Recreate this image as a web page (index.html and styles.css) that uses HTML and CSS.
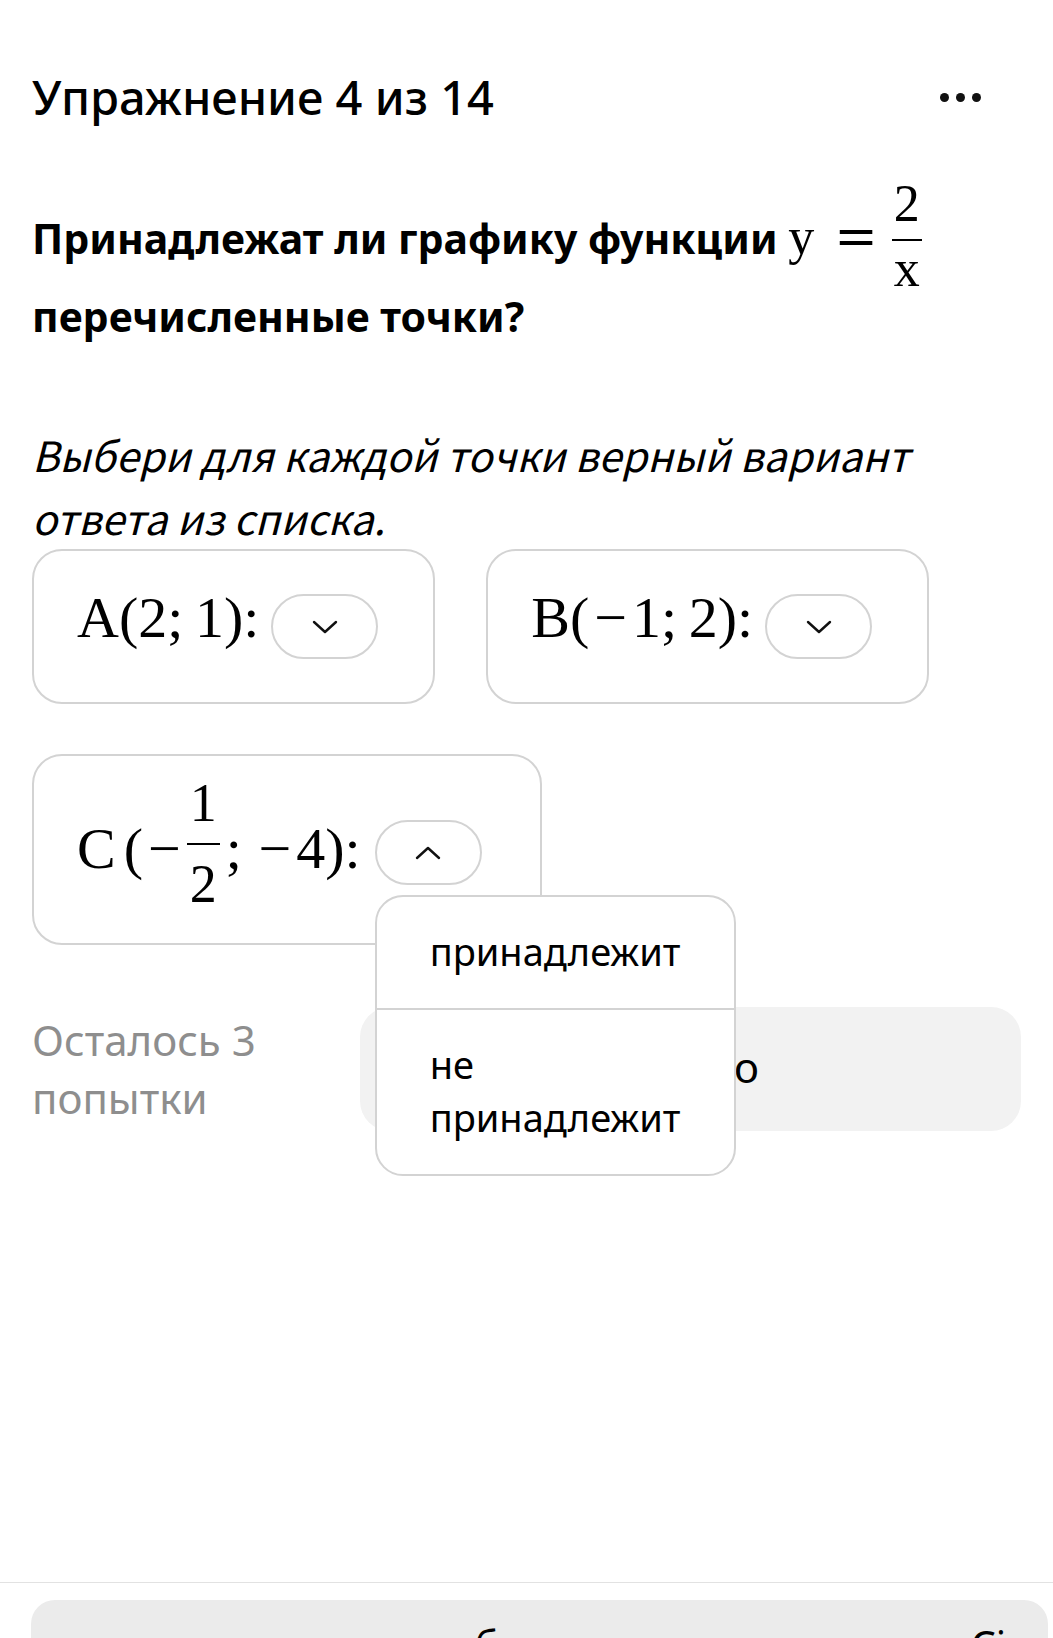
FILE: index.html
```html
<!DOCTYPE html>
<html lang="ru">
<head>
    <meta charset="UTF-8">
    <meta name="viewport" content="width=device-width, initial-scale=1.0">
    <title>Упражнение 4 из 14</title>
    <link rel="stylesheet" href="styles.css">
</head>
<body>

<div class="page">
    <header class="top">
        <h1 class="title">Упражнение 4 из 14</h1>
        <button class="more" aria-label="Ещё"><span></span><span></span><span></span></button>
    </header>

    <main class="task">
        <p class="question">Принадлежат ли графику функции <span class="math">y<span class="eq">=</span><span class="frac"><span class="num">2</span><span class="den">x</span></span></span> перечисленные точки?</p>

        <p class="hint">Выбери для каждой точки верный вариант ответа из списка.</p>

        <div class="points">
            <div class="point">
                <span class="tex">A(2;&thinsp;1):</span>
                <button class="pick">
                    <svg width="26" height="14" viewBox="0 0 26 14"><path d="M2 2l11 10 11-10" fill="none" stroke="#111" stroke-width="2.4" stroke-linecap="round" stroke-linejoin="round"/></svg>
                </button>
            </div>
            <div class="point">
                <span class="tex">B(<span class="minus">−</span>1;&thinsp;2):</span>
                <button class="pick">
                    <svg width="26" height="14" viewBox="0 0 26 14"><path d="M2 2l11 10 11-10" fill="none" stroke="#111" stroke-width="2.4" stroke-linecap="round" stroke-linejoin="round"/></svg>
                </button>
            </div>
            <div class="point point-tall">
                <span class="tex">C<span class="paren">(</span><span class="minus">−</span><span class="frac small"><span class="num">1</span><span class="den">2</span></span>;&thinsp;<span class="minus">−</span>4):</span>
                <div class="pick-wrap">
                    <button class="pick">
                        <svg width="26" height="14" viewBox="0 0 26 14"><path d="M2 12l11-10 11 10" fill="none" stroke="#111" stroke-width="2.4" stroke-linecap="round" stroke-linejoin="round"/></svg>
                    </button>
                    <ul class="menu">
                        <li>принадлежит</li>
                        <li>не принадлежит</li>
                    </ul>
                </div>
            </div>
        </div>

        <div class="actions">
            <p class="tries">Осталось 3 попытки</p>
            <button class="submit">Готово</button>
        </div>
    </main>

    <footer class="bottom">
        <div class="bottom-bar">
            <span class="bottom-label">обсудить в чате</span>
            <span class="bottom-icon">Ci</span>
        </div>
    </footer>
</div>

</body>
</html>
```

FILE: styles.css
```css
* {
    box-sizing: border-box;
}

body {
    font-family: 'Noto Sans', 'Open Sans', sans-serif;
    background-color: #fff;
    color: #000;
    margin: 0;
    padding: 0;
}

.page {
    height: 100vh;
    display: flex;
    flex-direction: column;
    overflow: hidden;
}

.top {
    display: flex;
    justify-content: space-between;
    align-items: center;
    padding: 65px 32px 0;
}

.title {
    margin: 0;
    font-size: 47px;
    font-weight: 500;
    line-height: 65px;
}

.more {
    display: flex;
    gap: 7px;
    margin-right: 40px;
    padding: 0;
    border: none;
    background: none;
}

.more span {
    width: 9px;
    height: 9px;
    border-radius: 50%;
    background-color: #111;
}

.task {
    padding: 0 32px;
}

/* question with inline formula */
.question {
    margin: 67px 0 0;
    font-size: 41px;
    font-weight: 700;
    line-height: 78px;
}

.math {
    font-family: 'Liberation Serif', serif;
    font-weight: 400;
    font-size: 52px;
}

.eq {
    margin: 0 14px 0 20px;
    font-family: 'DejaVu Serif', serif;
    font-size: 52px;
}

.frac {
    display: inline-flex;
    flex-direction: column;
    align-items: center;
    vertical-align: 33px;
    margin: -22px 0 -19px;
    font-size: 52px;
    line-height: 52px;
}

.frac .num {
    padding: 0 2px 9px;
    border-bottom: 2px solid #000;
}

.frac .den {
    padding-top: 2px;
}

.hint {
    margin: 68px 0 0;
    font-family: 'Noto Sans CJK SC', 'Noto Sans', sans-serif;
    font-size: 41.5px;
    font-style: italic;
    line-height: 63px;
}

/* answer cards */
.points {
    display: flex;
    flex-wrap: wrap;
    gap: 50px 51px;
}

.point {
    display: flex;
    align-items: center;
    gap: 12px;
    padding: 43px 55px 43px 43px;
    border: 2px solid #d3d3d3;
    border-radius: 30px;
}

.tex {
    font-family: 'Liberation Serif', serif;
    font-size: 58px;
    line-height: 60px;
    margin-top: -18px;
    white-space: nowrap;
}

.minus {
    margin: 0 5px;
}

.paren {
    margin-left: 8px;
}

.point-tall {
    padding: 64px 58px 58px 43px;
    gap: 14px;
}

.point-tall .tex {
    margin-top: -8px;
}

.frac.small {
    font-size: 54px;
    line-height: 54px;
    vertical-align: 47px;
    margin: -42px 6px -33px 1px;
}

.frac.small .num {
    padding: 0 3px 13px;
}

.frac.small .den {
    padding-top: 12px;
}

.pick-wrap {
    position: relative;
}

.pick {
    display: flex;
    align-items: center;
    justify-content: center;
    width: 107px;
    height: 65px;
    padding: 0;
    border: 2px solid #d3d3d3;
    border-radius: 33px;
    background-color: #fff;
}

.menu {
    position: absolute;
    top: calc(100% + 10px);
    left: 0;
    z-index: 2;
    width: 361px;
    margin: 0;
    padding: 0;
    list-style: none;
    background-color: #fff;
    border: 2px solid #d3d3d3;
    border-radius: 28px;
}

.menu li {
    padding: 28px 40px 30px 53px;
    font-size: 38px;
    line-height: 53px;
}

.menu li:first-child {
    border-bottom: 2px solid #d3d3d3;
}

.actions {
    display: flex;
    align-items: flex-start;
    gap: 28px;
    margin-top: 62px;
}

.tries {
    flex-shrink: 0;
    width: 300px;
    margin: 4px 0 0;
    font-size: 42px;
    line-height: 58px;
    color: #8e8e8e;
}

.submit {
    flex: 1;
    height: 124px;
    padding-bottom: 6px;
    border: none;
    border-radius: 30px;
    background-color: #f2f2f2;
    font-family: 'Noto Sans', sans-serif;
    font-size: 42px;
    color: #000;
}

.bottom {
    margin-top: auto;
    height: 56px;
    flex-shrink: 0;
    border-top: 1px solid #e2e2e2;
    padding: 17px 5px 0 31px;
    overflow: hidden;
}

.bottom-bar {
    display: flex;
    justify-content: space-between;
    height: 100px;
    padding: 18px 42px 0 420px;
    border-radius: 24px 24px 0 0;
    background-color: #ebebeb;
    font-size: 40px;
    line-height: 54px;
}
```
